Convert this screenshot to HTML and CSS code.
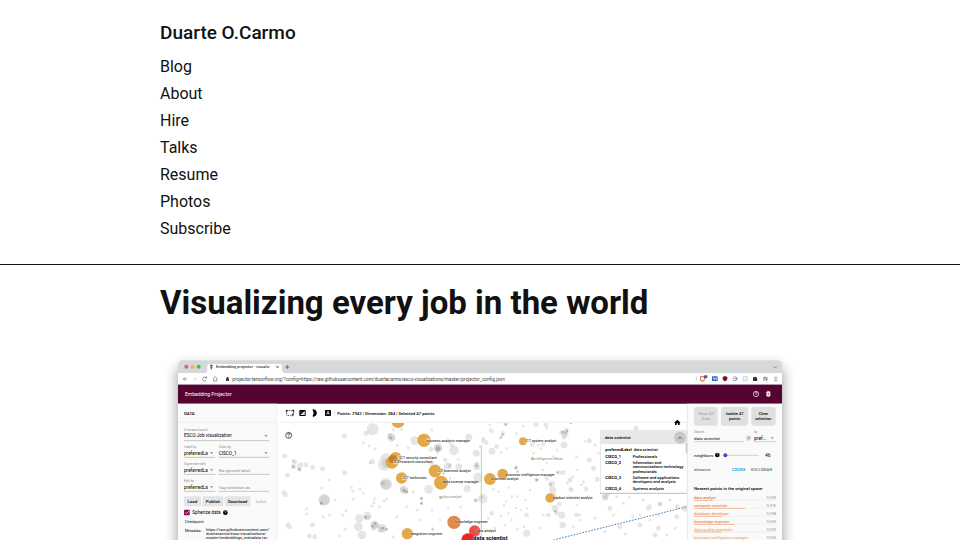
FILE: index.html
```
<!DOCTYPE html>
<html lang="en">
<head>
<meta charset="utf-8">
<meta name="viewport" content="width=device-width, initial-scale=1">
<title>Visualizing every job in the world</title>
<link rel="stylesheet" href="styles.css">
</head>
<body>
<header class="site-header">
  <div class="wrap">
    <a class="site-name" href="#">Duarte O.Carmo</a>
    <nav>
      <ul class="nav-list">
        <li><a href="#">Blog</a></li>
        <li><a href="#">About</a></li>
        <li><a href="#">Hire</a></li>
        <li><a href="#">Talks</a></li>
        <li><a href="#">Resume</a></li>
        <li><a href="#">Photos</a></li>
        <li><a href="#">Subscribe</a></li>
      </ul>
    </nav>
  </div>
</header>
<main class="wrap">
  <h1>Visualizing every job in the world</h1>
  <svg class="shot" viewBox="0 0 1920 585" role="img" aria-label="Embedding Projector">
    <defs>
      <filter id="shadow" x="-10%" y="-10%" width="120%" height="120%"><feGaussianBlur stdDeviation="20"/></filter>
      <clipPath id="plot"><rect x="352" y="234" width="1230" height="360"/></clipPath>
    </defs>
    <rect x="54" y="66" width="1812" height="640" rx="14" opacity=".42" filter="url(#shadow)"/>
    <path fill="#fff" d="M54 60a14 14 0 0 1 14-14H1852a14 14 0 0 1 14 14V585H54z"/>

    <!-- browser chrome -->
    <path fill="#d5d9dc" d="M54 84V60a14 14 0 0 1 14-14H1852a14 14 0 0 1 14 14V84z"/>
    <path fill="#fff" d="M136 84q6-2 6-10v-9q0-8 8-8H358q8 0 8 8v9q0 8 6 10z"/>
    <circle cx="79" cy="65" r="6" fill="#ee6157"/><circle cx="98" cy="65" r="6" fill="#f2b53d"/><circle cx="116" cy="65" r="6" fill="#46bf4b"/>
    <path d="M150 61h8M154 61v12M151 67h6" stroke="#59636d" stroke-width="4"/>
    <text x="168" y="70" class="t12">Embedding projector - visualiz</text>
    <path d="M349 62l7 7M356 62l-7 7M382 60v12M376 66h12" stroke="#444" stroke-width="2"/>
    <path d="M1841 64l5 5 5-5" class="line"/>
    <g class="line">
      <path d="M81 102H70m5-5-5 5 5 5"/><path d="M99 102h10m-5-5 5 5-5 5" opacity=".3"/><path d="M139 99a6 6 0 1 0 0 6M140 94v5h-5"/><path d="M160 101l6-6 6 6M161 101v7h9v-7"/>
    </g>
    <path d="M198 100h9v8h-9zM200 100v-3q2-4 5 0v3" fill="#444"/>
    <text x="217" y="107" class="t14 soft">projector.tensorflow.org/?config=https://raw.githubusercontent.com/duartecarmo/esco-visualizations/master/projector_config.json</text>
    <g transform="translate(1260 15)">
      <path d="M349 79v14" stroke="#bbb" stroke-width="2"/>
      <path d="M362 80h9l3 5-3 8h-8l-2-7z" fill="#fff" stroke="#db5a3c" stroke-width="3"/><rect x="372" y="76" width="10" height="9" rx="2" fill="#555c72"/>
      <rect x="396" y="79" width="17" height="14" rx="2" fill="#2563c9"/><path d="M401 82v6h4v-6m4 0v8" stroke="#fff" stroke-width="2" fill="none"/>
      <path d="M435 78l7 3v6q-1 5-7 7-6-2-7-7v-6z" fill="#7e1220"/>
      <circle cx="465" cy="86" r="6" fill="none" stroke="#91a5cb" stroke-width="3"/><path d="M465 86h7" stroke="#4a7bd0" stroke-width="3"/>
      <path d="M490 80h12v12h-12zM493 86h6" fill="none" stroke="#bbb" stroke-width="2"/>
      <path d="M519 82h4q2-5 4 0h4v4q4 2 0 4v3h-12z" fill="#333"/>
      <path d="M550 82h10M550 86h7M550 90h5M561 82v8" stroke="#444" stroke-width="2"/><circle cx="559" cy="90" r="2" fill="#444"/>
      <path d="M582 82h10M582 87h10M582 92h10" stroke="#888" stroke-width="2"/>
    </g>

    <!-- app bar -->
    <path fill="#550331" d="M54 120H1866v56H54z"/><path fill="#9d7890" d="M54 118H1866v2H54z"/>
    <text x="75" y="152" class="t15 white">Embedding Projector</text>
    <circle cx="1788" cy="147" r="8" fill="none" stroke="#fff" stroke-width="2"/>
    <path d="M1785 144q3-4 6 0 0 3-3 4v2" fill="none" stroke="#fff" stroke-width="2"/><circle cx="1788" cy="153" r="1" fill="#fff"/>
    <path d="M1818 142h14M1818 147h14M1818 152h14M1821 137l3 3M1829 137l-3 3" stroke="#fff" stroke-width="2"/><rect x="1820" y="139" width="10" height="16" rx="5" fill="#fff"/><path d="M1823 145h4M1823 149h4" stroke="#550331" stroke-width="2"/>

    <!-- left panel -->
    <g transform="translate(0 165)">
      <path fill="#fafafa" d="M54 11H350V420H54z"/>
      <path d="M54 67H350M350 11V420" stroke="#e8e8e8" stroke-width="2"/>
      <text x="72" y="45" class="t13 medium">DATA</text>
      <text x="72" y="94" class="t10 muted">5 tensors found</text><text x="72" y="112" class="t14">ESCO Job visualization</text>
      <text x="72" y="145" class="t10 muted">Label by</text><text x="72" y="164" class="t14">preferredLa</text>
      <text x="176" y="145" class="t10 muted">Color by</text><text x="176" y="164" class="t14">CISCO_1</text>
      <text x="72" y="196" class="t10 muted">Supervise with</text><text x="72" y="215" class="t14">preferredLa</text><text x="176" y="215" class="t13 muted">No ignored label</text>
      <text x="72" y="247" class="t10 muted">Edit by</text><text x="72" y="266" class="t14">preferredLa</text><text x="176" y="266" class="t13 muted">Tag selection as</text>
      <path d="M72 122H328M72 172H166M176 172H328M72 223H166M176 223H328M72 274H166M176 274H328" stroke="#aaa" stroke-width="2"/>
      <path d="M313 105h10l-5 5zM313 157h10l-5 5zM150 157h10l-5 5zM150 208h10l-5 5zM150 259h10l-5 5z" fill="#888"/>
      <g fill="#e4e4e4"><rect x="72" y="289" width="51" height="30" rx="3"/><rect x="128" y="289" width="62" height="30" rx="3"/><rect x="196" y="289" width="75" height="30" rx="3"/></g>
      <g class="t13 mid"><text x="97" y="308" class="medium">Load</text><text x="159" y="308" class="medium">Publish</text><text x="233" y="308" class="medium">Download</text><text x="303" y="308" class="faint">Label</text></g>
      <rect x="72" y="329" width="17" height="17" rx="2" fill="#880e4f"/><path d="M75 337l4 4 8-8" fill="none" stroke="#fff" stroke-width="2"/>
      <text x="97" y="342" class="t14">Spherize data</text><circle cx="196" cy="338" r="7"/><text x="196" y="342" class="t10 mid white">?</text>
      <text x="75" y="368" class="t11">Checkpoint:</text>
      <text x="75" y="395" class="t11">Metadata:</text>
      <text x="138" y="393" class="t12">https://raw.githubusercontent.com/</text><text x="138" y="405" class="t12">duartecarmo/esco-visualizations/</text><text x="138" y="417" class="t12">master/embeddings_metadata.tsv</text>
    </g>

    <!-- plot toolbar -->
    <g transform="translate(360 165)">
      <path d="M0 67H1222" stroke="#eaeaea" stroke-width="2"/>
      <path d="M19 32h6M19 31v6M36 31h5v6" fill="none" stroke="#000" stroke-width="3"/><path d="M27 32h8M20 38v8h12M40 38v5" fill="none" stroke="#000" stroke-width="2" stroke-dasharray="4 2"/><path d="M34 45h8M38 41v8" stroke="#000" stroke-width="2"/>
      <rect x="58" y="30" width="19" height="18" rx="2"/><path d="M61 45L74 33v12z" fill="#fff"/><path d="M61 36h6m1 6h5" stroke="#888" stroke-width="2"/>
      <path d="M99 29a10 10 0 0 1 0 20q7-10 0-20z" stroke="#000" stroke-width="3"/>
      <rect x="135" y="30" width="18" height="18" rx="2"/><path d="M140 44l4-11 4 11M142 40h5" fill="none" stroke="#fff" stroke-width="2"/>
      <path d="M164 30v18" stroke="#ddd" stroke-width="2"/>
      <text x="172" y="44" class="t13 medium">Points: 2942 | Dimension: 384 | Selected 47 points</text>
      <circle cx="26" cy="106" r="9" fill="none" stroke="#111" stroke-width="2"/><path d="M23 104q0-4 3-4t3 3q0 2-3 4v2M26 111v2" fill="none" stroke="#111" stroke-width="2"/>
    </g>

    <!-- point cloud -->
    <g clip-path="url(#plot)">
      <g class="dots" transform="translate(360 165)">
        <path stroke-width="9" d="M250 128h0M268 138h0M285 146h0M40 182h0M148 240h0M126 264h0M124 310h0M165 300h0M214 262h0M218 274h0M240 268h0M250 280h0M220 298h0M284 296h0M320 298h0M312 302h0M298 320h0M275 318h0M282 308h0M80 326h0M80 342h0M149 345h0M130 350h0M198 332h0M188 345h0M195 388h0M178 408h0M455 90h0M365 88h0M340 89h0M384 143h0M352 136h0M270 188h0M425 296h0M425 310h0M412 330h0M458 388h0M350 350h0M380 320h0M340 410h0M420 360h0M400 276h0"/>
        <path stroke-width="15" d="M14 168h0M58 208h0M40 200h0M44 186h0M62 194h0M78 194h0M98 202h0M128 206h0M22 226h0M12 278h0M16 284h0M58 198h0M194 218h0M277 185h0M98 374h0M28 380h0M24 376h0M88 408h0M104 410h0M193 107h0M258 100h0M453 148h0M474 148h0M262 352h0M330 108h0M337 114h0M378 273h0M368 268h0M284 373h0M295 378h0M310 386h0M300 390h0M280 385h0M308 250h0"/>
        <path stroke-width="26" d="M238 355h0M262 348h0M235 380h0M283 375h0M308 385h0M246 405h0M334 112h0M404 122h0M372 270h0M446 268h0M474 143h0"/>
        <path stroke-width="36" d="M278 88h0M318 252h0M133 300h0M318 178h0M312 194h0"/>
        <path stroke-width="30" stroke-opacity=".12" d="M133 300h0M318 254h0M320 190h0"/>
        <path stroke-width="8" stroke-opacity=".32" d="M58 208h0M40 200h0M256 352h0M278 378h0M286 370h0M372 272h0M380 276h0M332 114h0M308 384h0M320 388h0M424 295h0M424 310h0M124 310h0"/>
      </g>
      <g class="dots" transform="translate(810 165)">
        <path stroke-width="8" d="M180 75h0M210 115h0M160 115h0M230 145h0M214 158h0M280 78h0M350 85h0M332 146h0M466 124h0M22 160h0M245 290h0M287 300h0M258 324h0M245 360h0M272 330h0M290 325h0M92 322h0M55 325h0M195 385h0M282 380h0M430 380h0M415 290h0M190 268h0M205 275h0M236 262h0M228 305h0M222 316h0M175 355h0M212 348h0M235 340h0M262 290h0M300 270h0M338 210h0M350 190h0M150 140h0M60 235h0M85 178h0M95 248h0M6 330h0M8 388h0M30 360h0M310 160h0M325 136h0M440 210h0M370 170h0M455 255h0M340 345h0M330 385h0M262 388h0M225 375h0M172 390h0M260 100h0M440 315h0M450 360h0M380 150h0"/>
        <path stroke-width="14" d="M227 72h0M318 75h0M348 75h0M218 100h0M184 92h0M168 128h0M160 122h0M65 135h0M24 145h0M340 132h0M394 98h0M60 197h0M137 301h0M258 203h0M320 240h0M388 218h0M400 218h0M424 270h0M440 345h0M185 340h0M290 345h0M350 235h0M378 295h0M380 340h0M388 312h0M5 190h0M46 180h0M18 198h0M140 192h0M306 134h0M408 92h0M402 112h0M200 140h0M355 345h0"/>
        <path stroke-width="21" d="M116 112h0M139 160h0M186 154h0M405 102h0M402 135h0M140 200h0M86 200h0M112 266h0M365 253h0M368 270h0M368 285h0M375 325h0M396 346h0M24 145h0M290 400h0M52 198h0"/>
        <path stroke-width="29" d="M72 152h0M144 232h0M158 296h0"/>
        <path stroke-width="7" stroke-opacity=".35" d="M227 73h0M218 104h0M214 112h0M137 301h0M140 199h0M258 203h0M263 215h0M320 240h0M382 217h0M362 253h0M370 300h0M407 100h0M398 96h0M412 92h0M40 220h0M36 212h0M155 292h0M375 334h0"/>
      </g>
      <g class="dots" transform="translate(1200 165)">
        <path stroke-width="9" d="M105 135h0M38 230h0M22 250h0M30 265h0M300 312h0M240 345h0M190 310h0M135 395h0M270 360h0M60 345h0M208 290h0M330 300h0M160 345h0M250 300h0M218 350h0M295 345h0M320 405h0M195 402h0M105 355h0M85 290h0M50 170h0M70 245h0M115 160h0M345 385h0M170 290h0"/>
        <path stroke-width="15" d="M88 122h0M228 84h0M88 180h0M100 205h0M112 238h0M150 325h0M268 320h0M180 380h0M350 350h0M295 385h0M136 290h0M300 312h0M352 320h0M240 375h0M265 325h0M30 240h0M145 280h0M285 405h0M78 267h0"/>
        <path stroke-width="20" d="M8 375h0M136 292h0M375 325h0"/>
      </g>
      <g transform="translate(810 165)">
        <path d="M154 136V420" stroke="#93ee86" stroke-width="3"/>
        <path d="M370 420L775 319" stroke="#4f83c2" stroke-width="3" stroke-dasharray="5 4"/>
        <g fill="#e2a236" fill-opacity=".92">
          <circle cx="-96" cy="64" r="20"/><circle cx="-18" cy="121" r="20"/><circle cx="-103" cy="174" r="18"/><circle cx="-114" cy="187" r="19"/><circle cx="-85" cy="234" r="17"/><circle cx="-68" cy="401" r="17"/>
          <circle cx="15" cy="213" r="19"/><circle cx="33" cy="248" r="21"/><circle cx="180" cy="237" r="18"/><circle cx="218" cy="222" r="16"/><circle cx="279" cy="124" r="12"/><circle cx="360" cy="294" r="14"/><circle cx="308" cy="176" r="5"/><circle cx="32" cy="293" r="4"/><circle cx="423" cy="64" r="7"/>
        </g>
        <circle cx="-112" cy="177" r="12" fill="#ba6b16" opacity=".65"/><circle cx="72" cy="367" r="20" fill="#e18b4b"/><circle cx="134" cy="393" r="17" fill="#ed4d48"/><circle cx="114" cy="420" r="20" fill="#ed2625"/>
        <g fill="#fff" opacity=".5"><circle cx="-7" cy="121" r="7"/><circle cx="-90" cy="173" r="7"/><circle cx="-103" cy="187" r="7"/><circle cx="-76" cy="234" r="7"/><circle cx="26" cy="213" r="6"/><circle cx="290" cy="124" r="6"/></g>
        <g class="t11 label">
          <text x="-12" y="125">business analysis manager</text><text x="-92" y="177">ICT security consultant</text><text x="-108" y="190">ICT research consultant</text><text x="-80" y="237">ICT technician</text><text x="-60" y="404">integration engineer</text>
          <text x="22" y="217">ICT business analyst</text><text x="38" y="250">data science manager</text><text x="184" y="241">business analyst</text><text x="226" y="227">business intelligence manager</text><text x="286" y="127">ICT system analyst</text><text x="310" y="179" class="muted">intelligence officer</text><text x="368" y="298">product scientist analyst</text><text x="28" y="295" class="muted">policy analyst</text><text x="76" y="370">knowledge engineer</text><text x="138" y="396">data analyst</text>
        </g>
        <text x="130" y="420" class="t17 bold label">data scientist</text>
      </g>
    </g>

    <!-- point details -->
    <g transform="translate(1200 165)">
      <path d="M352 59l-10 9h3v7h5v-5h4v5h5v-7h3z"/>
      <rect x="121" y="91" width="261" height="190" fill="#fff" stroke="#ddd" stroke-width="2"/><path d="M121 280h261" stroke="#aaa" stroke-width="2"/>
      <path fill="#e8e8e8" d="M121 91H382v42H121z"/><circle cx="360" cy="113" r="18" fill="#c7c7c7"/><path d="M355 116l5-5 5 5" fill="none" stroke="#222" stroke-width="2"/>
      <text x="134" y="118" class="t13 medium">data scientist</text>
      <g class="t12 bold"><text x="136" y="154">preferredLabel</text><text x="136" y="173">CISCO_1</text><text x="136" y="192">CISCO_2</text><text x="136" y="237">CISCO_3</text><text x="136" y="269">CISCO_4</text></g>
      <g class="t12 medium"><text x="221" y="154">data scientist</text><text x="218" y="173">Professionals</text><text x="218" y="192">Information and</text><text x="218" y="205">communications technology</text><text x="218" y="218">professionals</text><text x="218" y="237">Software and applications</text><text x="218" y="250">developers and analysts</text><text x="218" y="269">Systems analysts</text></g>
    </g>

    <!-- right panel -->
    <g transform="translate(1560 165)">
      <path fill="#fafafa" d="M22 11H306V420H22z"/><path d="M22 11V420" stroke="#e1e1e1" stroke-width="2"/>
      <rect x="17" y="130" width="5" height="30" fill="#ccc"/>
      <g fill="#e0e0e0"><rect x="42" y="21" width="71" height="56" rx="7"/><rect x="123" y="21" width="81" height="56" rx="7"/><rect x="214" y="21" width="73" height="56" rx="7"/></g>
      <g class="t12 mid medium"><text x="78" y="45" class="faint">Show All</text><text x="78" y="60" class="faint">Data</text><text x="164" y="45">Isolate 47</text><text x="164" y="60">points</text><text x="250" y="45">Clear</text><text x="250" y="60">selection</text></g>
      <text x="42" y="98" class="t10 muted">Search</text><text x="42" y="119" class="t13">data scientist</text>
      <rect x="198" y="107" width="15" height="15" fill="#ddd"/><text x="205" y="119" class="t12 mid">.*</text>
      <text x="222" y="98" class="t10 muted">by</text><text x="222" y="119" class="t15">pref…</text><path d="M272 112h9l-4 5z" fill="#888"/>
      <path d="M42 125H192M222 125H287" stroke="#bbb" stroke-width="2"/>
      <text x="42" y="170" class="t13">neighbors</text><circle cx="112" cy="165" r="7"/><text x="112" y="169" class="t10 mid white">?</text>
      <path d="M136 166H236" stroke="#bbb" stroke-width="2"/><circle cx="136" cy="166" r="6" fill="#3f51b5"/><text x="255" y="171" class="t15">46</text>
      <text x="42" y="213" class="t13 soft">distance</text><text x="155" y="213" class="t12 medium blue">COSINE</text><text x="213" y="213" class="t12 soft">EUCLIDEAN</text>
      <text x="42" y="270" class="t13 medium">Nearest points in the original space</text>
      <g class="t12"><text x="42" y="297" fill="#e34c3c">data analyst</text><text x="42" y="321" fill="#e95e35">computer scientist</text><text x="42" y="345" fill="#e88136">database developer</text><text x="42" y="368" fill="#df702c">knowledge engineer</text><text x="42" y="392" fill="#e39b4d">data quality specialist</text><text x="42" y="416" fill="#e39b4d">business intelligence manager</text></g>
      <path d="M42 301H100M42 325H195M42 349H125M42 373H165M42 396H125" stroke="#ef9269" stroke-width="2"/><path d="M100 301H288M195 325H288M125 349H288M165 373H288M125 396H288" stroke="#ddd"/>
      <g class="t11 end muted"><text x="288" y="297">0.339</text><text x="288" y="321">0.376</text><text x="288" y="345">0.398</text><text x="288" y="368">0.505</text><text x="288" y="392">0.529</text><text x="288" y="416">0.536</text></g>
    </g>
  </svg>
</main>
</body>
</html>
```
FILE: styles.css
```
* { box-sizing: border-box; }
body {
  margin: 0;
  background: #fff;
  color: #111;
  font: 16px/27px Roboto, "Liberation Sans", sans-serif;
}
a { color: inherit; text-decoration: none; }
.wrap {
  width: 100%;
  max-width: 672px;
  margin: 0 auto;
  padding: 0 16px;
}
.site-header {
  padding: 19px 0 22px;
  border-bottom: 1px solid #111;
}
.site-name {
  display: block;
  margin-bottom: 7px;
  font-size: 19px;
  font-weight: 500;
}
.nav-list {
  margin: 0;
  padding: 0;
  list-style: none;
}
h1 {
  margin: 18px 0 22px;
  font-size: 33px;
  line-height: 40px;
  font-weight: 700;
}
.shot {
  display: block;
  width: 100%;
  height: auto;
  font-family: Roboto, sans-serif;
}
.shot text { white-space: pre; }
.t10 { font-size: 10px; }
.t11 { font-size: 11px; }
.t12 { font-size: 12px; }
.t13 { font-size: 13px; }
.t14 { font-size: 14px; }
.t15 { font-size: 15px; }
.t17 { font-size: 17px; }
.medium { font-weight: 500; }
.bold { font-weight: 700; }
.mid { text-anchor: middle; }
.end { text-anchor: end; }
.white { fill: #fff; }
.muted { fill: #888; }
.faint { fill: #aaa; }
.soft { fill: #444; }
.blue { fill: #039be5; }
.line { fill: none; stroke: #666; stroke-width: 2; }
.dots { fill: none; stroke: #555; stroke-opacity: .15; stroke-linecap: round; }
.label { paint-order: stroke; stroke: #fff; stroke-width: 2; stroke-opacity: .6; }
```
